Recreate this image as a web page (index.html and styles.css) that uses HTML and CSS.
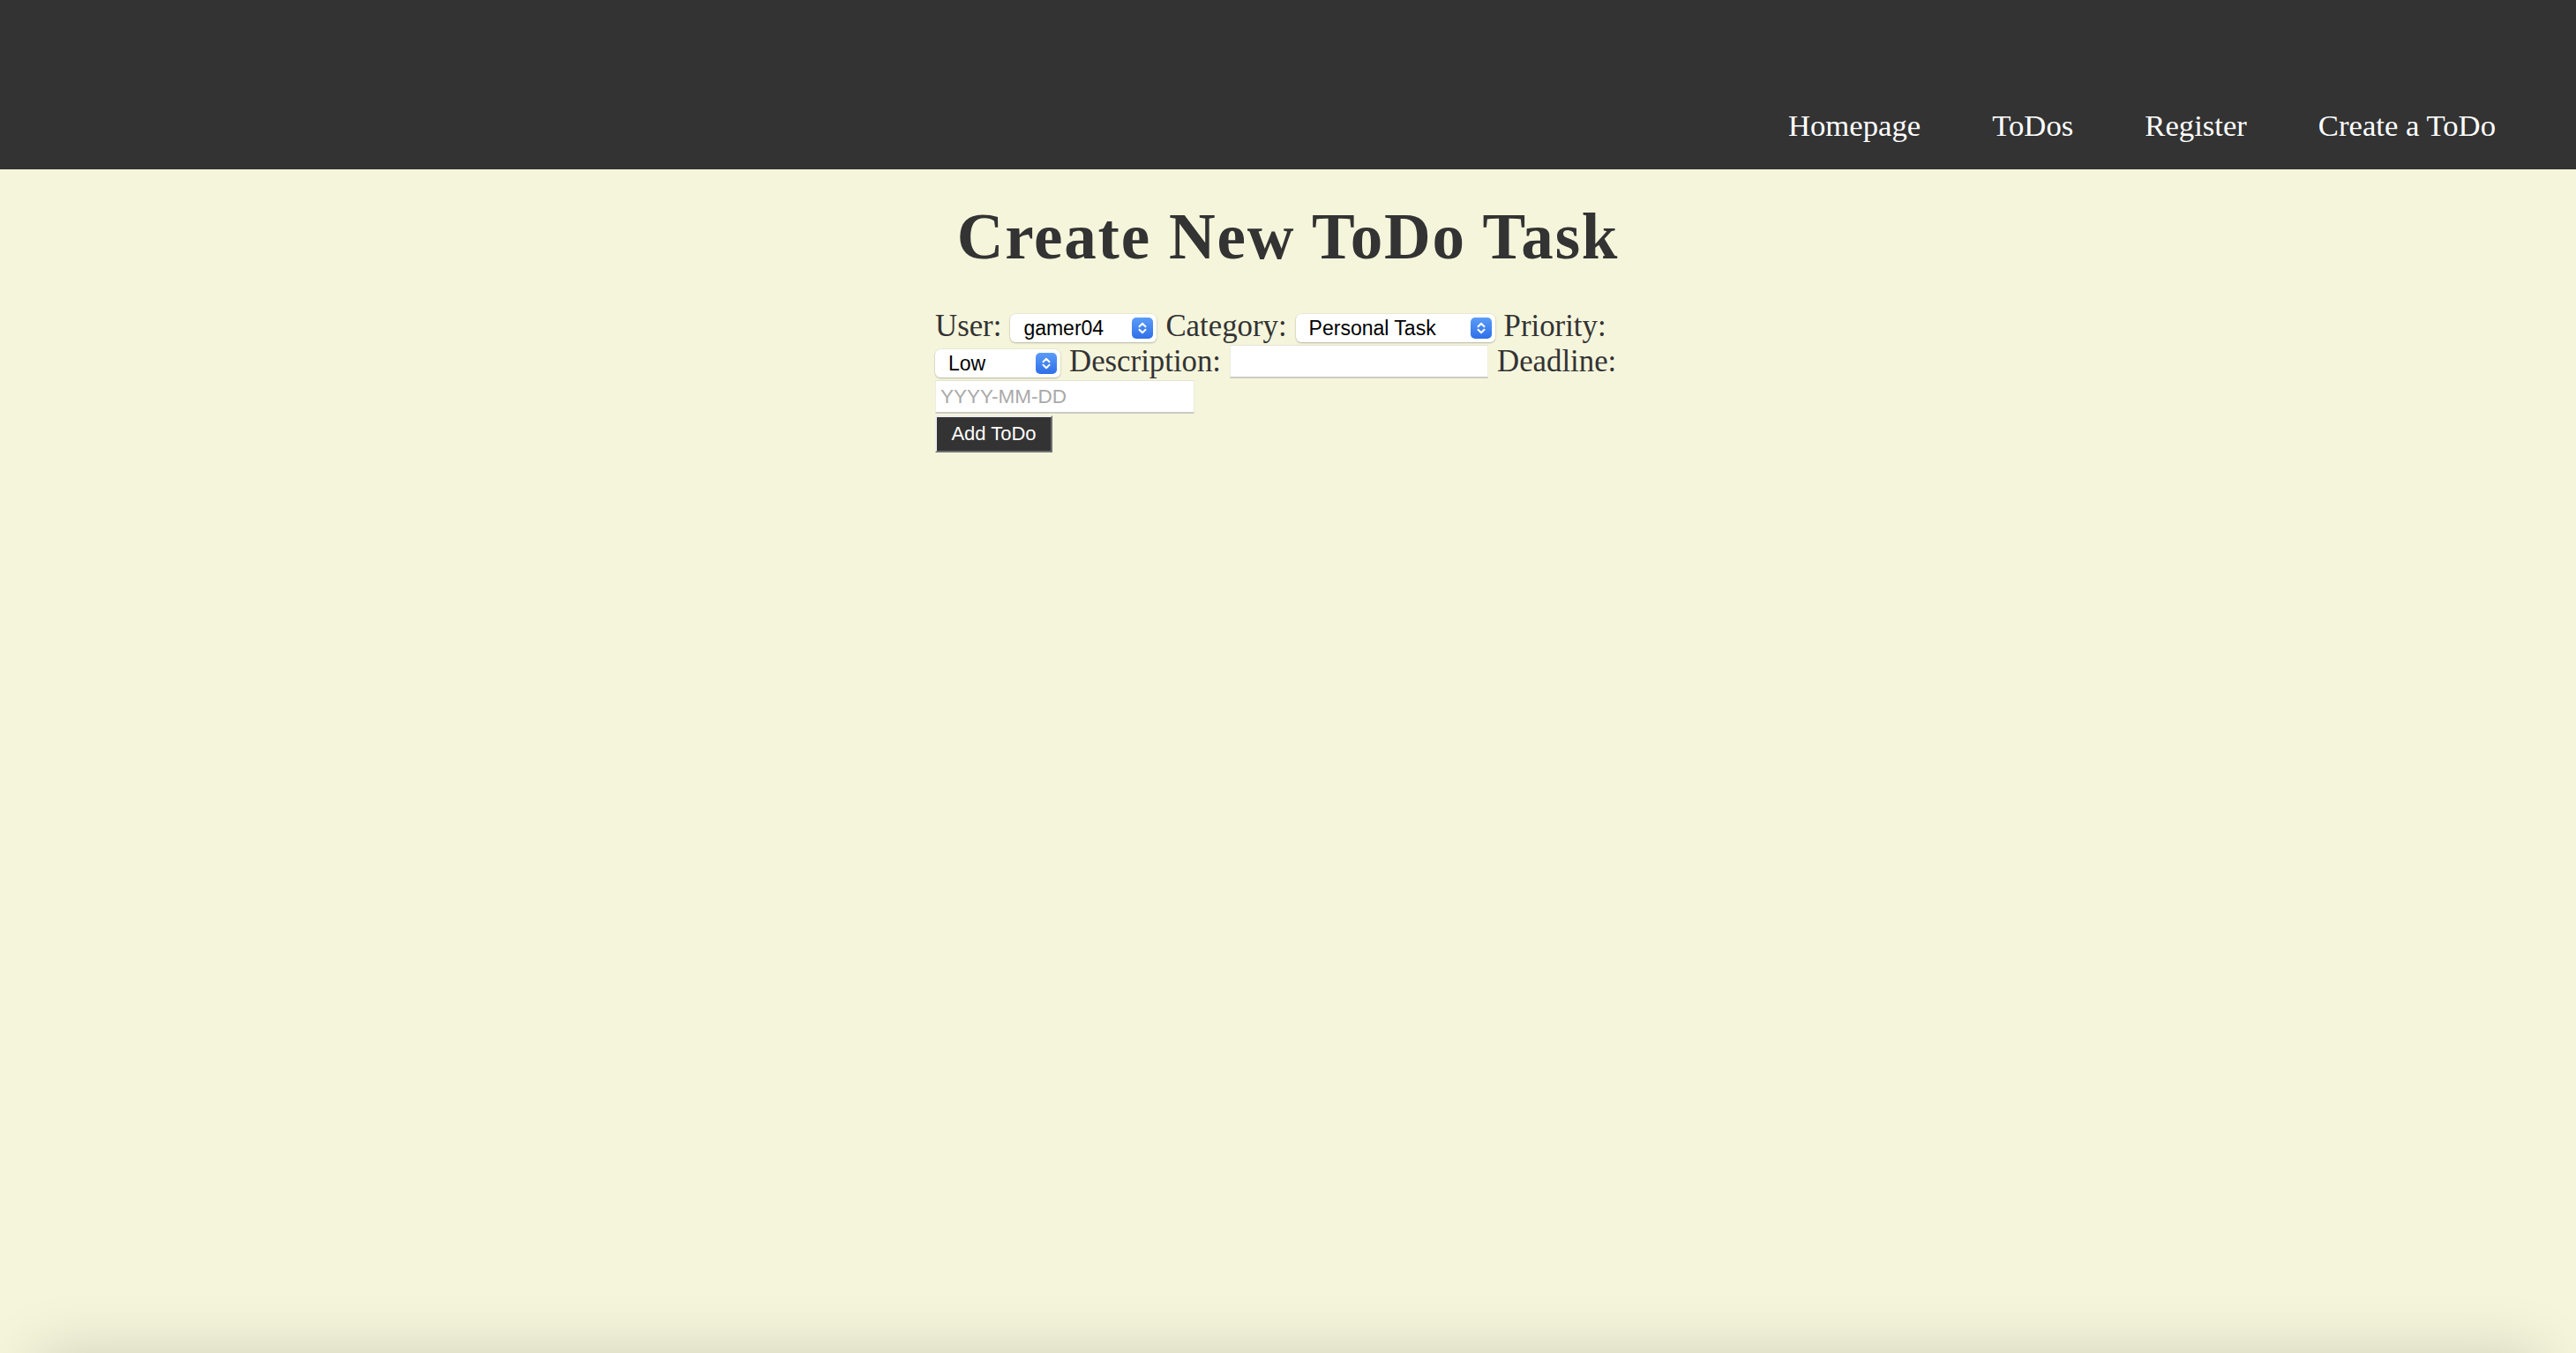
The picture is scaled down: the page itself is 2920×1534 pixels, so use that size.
FILE: index.html
```html
<!DOCTYPE html>
<html lang="en">
<head>
<meta charset="utf-8">
<title>Create New ToDo Task</title>
<link rel="stylesheet" href="styles.css">
</head>
<body>
<header class="site-header">
  <nav class="main-nav">
    <a class="nav-link" href="#">Homepage</a>
    <a class="nav-link" href="#">ToDos</a>
    <a class="nav-link" href="#">Register</a>
    <a class="nav-link" href="#">Create a ToDo</a>
  </nav>
</header>
<main class="page">
  <h1 class="page-title">Create New ToDo Task</h1>
  <form class="todo-form">
    <label class="field-label" for="user">User:</label>
    <span class="select-wrap select-user">
      <select class="select" id="user"><option>gamer04</option></select>
      <span class="stepper"><svg viewBox="0 0 24 24" width="24" height="24"><path d="M8.5 10.2 L12 6.8 L15.5 10.2 M8.5 13.8 L12 17.2 L15.5 13.8" fill="none" stroke="#fff" stroke-width="2" stroke-linecap="round" stroke-linejoin="round"/></svg></span>
    </span>
    <label class="field-label" for="category">Category:</label>
    <span class="select-wrap select-category">
      <select class="select" id="category"><option>Personal Task</option></select>
      <span class="stepper"><svg viewBox="0 0 24 24" width="24" height="24"><path d="M8.5 10.2 L12 6.8 L15.5 10.2 M8.5 13.8 L12 17.2 L15.5 13.8" fill="none" stroke="#fff" stroke-width="2" stroke-linecap="round" stroke-linejoin="round"/></svg></span>
    </span>
    <label class="field-label" for="priority">Priority:</label>
    <span class="select-wrap select-priority">
      <select class="select" id="priority"><option>Low</option></select>
      <span class="stepper"><svg viewBox="0 0 24 24" width="24" height="24"><path d="M8.5 10.2 L12 6.8 L15.5 10.2 M8.5 13.8 L12 17.2 L15.5 13.8" fill="none" stroke="#fff" stroke-width="2" stroke-linecap="round" stroke-linejoin="round"/></svg></span>
    </span>
    <label class="field-label" for="description">Description:</label>
    <input class="text-input input-desc" id="description" type="text">
    <label class="field-label" for="deadline">Deadline:</label>
    <input class="text-input input-date" id="deadline" type="text" placeholder="YYYY-MM-DD">
    <span class="row-break"></span>
    <button class="add-btn" type="submit">Add ToDo</button>
  </form>
</main>
<div class="page-shadow"></div>
</body>
</html>
```
FILE: styles.css
```css
html, body {
  margin: 0;
  padding: 0;
}

body {
  background: #f5f5dc;
  color: #333;
  font-family: "Liberation Serif", "Times New Roman", serif;
  min-height: 100vh;
}

.site-header {
  background: #333333;
  height: 192px;
  box-sizing: border-box;
  display: flex;
  align-items: flex-end;
  justify-content: flex-end;
  padding: 0 91px 29px 0;
}

.main-nav {
  display: flex;
  gap: 81px;
}

.nav-link {
  color: #ffffff;
  text-decoration: none;
  font-size: 34.7px;
  line-height: 40px;
}

.page {
  display: flex;
  flex-direction: column;
  align-items: center;
}

.page-title {
  margin: 35px 0 0;
  font-size: 73px;
  line-height: 84px;
  font-weight: bold;
  letter-spacing: 1.8px;
  color: #333;
}

.todo-form {
  width: 800px;
  margin: 39px 0 0;
  display: flex;
  flex-wrap: wrap;
  align-items: center;
  column-gap: 10px;
  row-gap: 0;
}

.field-label {
  font-size: 34.8px;
  line-height: 39px;
  margin-bottom: 1px;
  color: #333;
}

.select-wrap {
  position: relative;
  display: block;
  height: 32px;
  margin-top: 3px;
}

.select-user { width: 166px; }
.select-category { width: 226px; }
.select-priority { width: 142px; }

.select {
  -webkit-appearance: none;
  appearance: none;
  display: block;
  width: 100%;
  height: 32px;
  margin: 0;
  border: none;
  border-radius: 6px;
  background: #ffffff;
  box-shadow: 0 0 0 0.5px rgba(0, 0, 0, 0.08), 0 1px 2px rgba(0, 0, 0, 0.22);
  padding: 0 34px 0 15px;
  font-family: "Liberation Sans", Arial, sans-serif;
  font-size: 23px;
  line-height: 32px;
  color: #000;
}

.stepper {
  position: absolute;
  right: 4px;
  top: 4px;
  width: 24px;
  height: 24px;
  border-radius: 5px;
  background: linear-gradient(#5b9cf8, #2f6fe8);
  pointer-events: none;
}

.stepper svg {
  display: block;
}

.text-input {
  box-sizing: border-box;
  height: 38px;
  margin: 1px 0;
  background: #ffffff;
  border-style: solid;
  border-width: 1px 1px 2px 1px;
  border-color: #e4e4d2 #eeeedf #cbcbc3 #eeeedf;
  padding: 0 5px;
  font-family: "Liberation Sans", Arial, sans-serif;
  font-size: 22.5px;
  color: #000;
  outline: none;
}

.text-input::placeholder {
  color: #a9a9a9;
}

.input-desc { width: 293px; }
.input-date { width: 294px; }

.row-break {
  flex-basis: 100%;
  height: 0;
}

.add-btn {
  box-sizing: border-box;
  width: 133px;
  height: 42px;
  margin: 1px 0 0;
  padding: 0;
  background: #333333;
  color: #ffffff;
  border-style: solid;
  border-width: 2px;
  border-color: #ececec #707070 #707070 #ececec;
  font-family: "Liberation Sans", Arial, sans-serif;
  font-size: 22px;
  text-align: center;
}

.page-shadow {
  position: fixed;
  left: 40px;
  right: 40px;
  top: 100%;
  height: 200px;
  box-shadow: 0 0 70px rgba(0, 0, 0, 0.15);
  pointer-events: none;
}
```
